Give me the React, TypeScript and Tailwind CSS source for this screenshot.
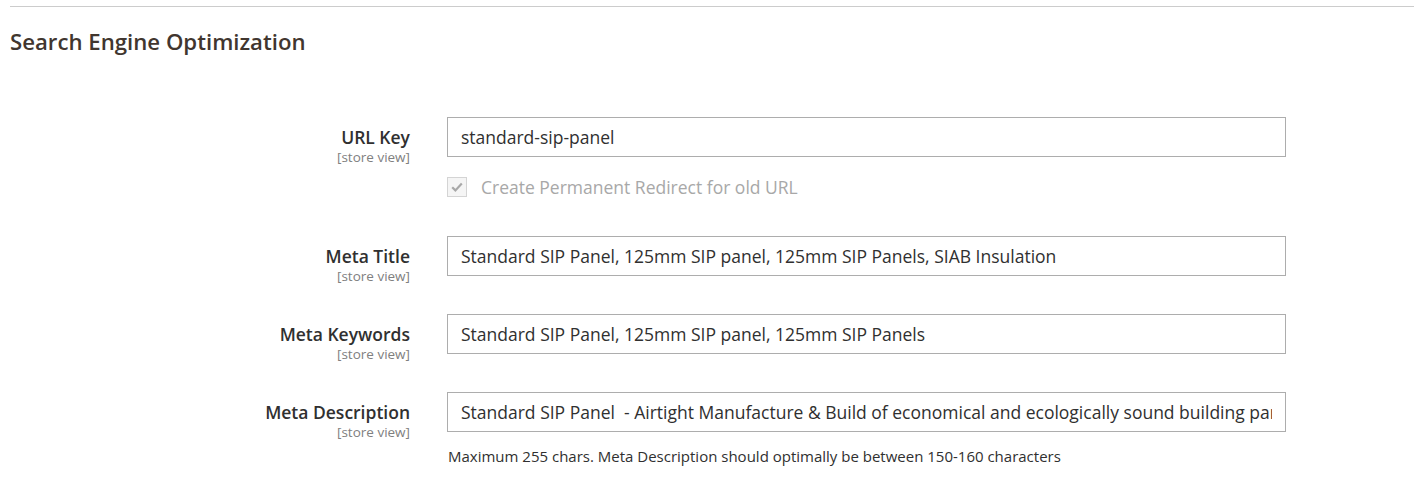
import React from 'react';

type Field = {
  label: string;
  value: string;
};

const fields: Field[] = [
  { label: 'Meta Title', value: 'Standard SIP Panel, 125mm SIP panel, 125mm SIP Panels, SIAB Insulation' },
  { label: 'Meta Keywords', value: 'Standard SIP Panel, 125mm SIP panel, 125mm SIP Panels' },
  {
    label: 'Meta Description',
    value:
      'Standard SIP Panel  - Airtight Manufacture & Build of economical and ecologically sound building panels for walls, roofs and floors',
  },
];

function Label({ text }: { text: string }) {
  // fixed height so the label never pushes the row taller than the input
  return (
    <div className="w-[400px] shrink-0 h-[40px] text-right pt-[10px]">
      <div className="text-[17.5px] leading-[20px] font-semibold text-[#303030]">{text}</div>
      <div className="mt-[2px] text-[13.5px] leading-[16px] text-[#808080]">[store view]</div>
    </div>
  );
}

function TextInput({ value }: { value: string }) {
  return (
    <input
      readOnly
      value={value}
      className="w-full h-[40px] border border-[#adadad] bg-white px-[13px] text-[17.5px] text-[#303030] outline-none font-['Open_Sans',sans-serif]"
    />
  );
}

export default function App() {
  return (
    <div className="min-h-screen bg-white font-['Open_Sans',sans-serif] pl-[10px] pt-[6px]">
      <div className="border-t border-[#cccccc]" />
      <h2 className="mt-[20px] text-[22.2px] leading-[30px] font-semibold text-[#41362f]">
        Search Engine Optimization
      </h2>

      <div className="mt-[60px] flex flex-col">
        {/* URL Key */}
        <div className="flex items-start gap-x-[37px]">
          <Label text="URL Key" />
          <div className="w-[839px]">
            <TextInput value="standard-sip-panel" />
            <div className="mt-[20px] mb-[1px] h-[20px] flex items-center gap-[14px]">
              <div className="w-[20px] h-[20px] border border-[#d4d4d4] bg-[#f5f5f5] flex items-center justify-center">
                <svg width="14" height="14" viewBox="0 0 14 14" fill="none">
                  <path d="M2.2 7.2 L5.4 10.4 L11.8 3.6" stroke="#a8a8a8" strokeWidth="2.2" />
                </svg>
              </div>
              <span className="text-[17.5px] leading-[20px] text-[#a8a8a8]">Create Permanent Redirect for old URL</span>
            </div>
          </div>
        </div>

        {fields.map((f) => (
          <div key={f.label} className="mt-[38px] flex items-start gap-x-[37px]">
            <Label text={f.label} />
            <div className="w-[839px]">
              <TextInput value={f.value} />
              {f.label === 'Meta Description' && (
                <div className="mt-[14px] pl-[1px] text-[15px] leading-[20px] text-[#303030]">
                  Maximum 255 chars. Meta Description should optimally be between 150-160 characters
                </div>
              )}
            </div>
          </div>
        ))}
      </div>
    </div>
  );
}
